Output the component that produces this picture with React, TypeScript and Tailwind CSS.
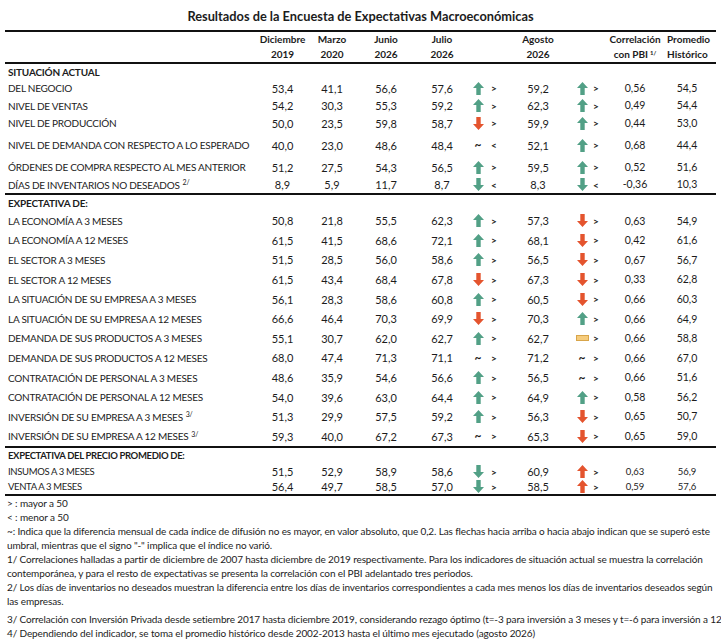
import React from "react";

type Ind = "gu" | "gd" | "ru" | "rd" | "t" | "y";

const GREEN = "#52a086";
const RED = "#e4542e";

function Arrow({ ind }: { ind: Ind }) {
  if (ind === "t") {
    return <span className="text-[12px] font-bold leading-none">~</span>;
  }
  if (ind === "y") {
    return <span className="block h-[6px] w-[13px] border border-[#d8a54a] bg-[#f6cc7c]" />;
  }
  const up = ind === "gu" || ind === "ru";
  const color = ind === "gu" || ind === "gd" ? GREEN : RED;
  return (
    <svg width="11" height="13" viewBox="0 0 11 13" className="block">
      <path
        d={
          up
            ? "M5.5 0 L11 6 L7.7 6 L7.7 13 L3.3 13 L3.3 6 L0 6 Z"
            : "M5.5 13 L11 7 L7.7 7 L7.7 0 L3.3 0 L3.3 7 L0 7 Z"
        }
        fill={color}
      />
    </svg>
  );
}

type RowData = {
  l: string;
  sup?: string;
  v: string[];
  a1: Ind;
  s1: string;
  ag: string;
  a2: Ind;
  s2: string;
  c: string;
  h: string;
  cls: string;
};

const GRID =
  "grid grid-cols-[252px_49px_50px_58px_54px_18px_14px_74px_14px_14px_64px_40px] items-center";

function Row({ r, small }: { r: RowData; small?: boolean }) {
  return (
    <div className={`${GRID} ${r.cls}`}>
      <div
        className={
          small
            ? "pl-[2px] whitespace-nowrap text-[9.5px] tracking-[-0.35px]"
            : "pl-[2px] whitespace-nowrap text-[10px] tracking-[-0.25px]"
        }
      >
        {r.l}
        {r.sup ? <sup className="ml-[3px] text-[7px]">{r.sup}</sup> : null}
      </div>
      {r.v.map((x, i) => (
        <div key={i} className="text-center">
          {x}
        </div>
      ))}
      <div className="flex justify-center">
        <Arrow ind={r.a1} />
      </div>
      <div className="text-center font-bold text-[10px]">{r.s1}</div>
      <div className="text-center">{r.ag}</div>
      <div className="flex justify-center">
        <Arrow ind={r.a2} />
      </div>
      <div className="text-center font-bold text-[10px]">{r.s2}</div>
      <div className={small ? "text-center text-[9.5px]" : "text-center text-[10.5px]"}>{r.c}</div>
      <div className={small ? "text-center text-[9.5px]" : "text-center text-[10.5px]"}>{r.h}</div>
    </div>
  );
}

const sit: RowData[] = [
  { l: "DEL NEGOCIO", v: ["53,4", "41,1", "56,6", "57,6"], a1: "gu", s1: ">", ag: "59,2", a2: "gu", s2: ">", c: "0,56", h: "54,5", cls: "h-[18px]" },
  { l: "NIVEL DE VENTAS", v: ["54,2", "30,3", "55,3", "59,2"], a1: "gu", s1: ">", ag: "62,3", a2: "gu", s2: ">", c: "0,49", h: "54,4", cls: "h-[17px]" },
  { l: "NIVEL DE PRODUCCIÓN", v: ["50,0", "23,5", "59,8", "58,7"], a1: "rd", s1: ">", ag: "59,9", a2: "gu", s2: ">", c: "0,44", h: "53,0", cls: "h-[18px]" },
  { l: "NIVEL DE DEMANDA CON RESPECTO A LO ESPERADO", v: ["40,0", "23,0", "48,6", "48,4"], a1: "t", s1: "<", ag: "52,1", a2: "gu", s2: ">", c: "0,68", h: "44,4", cls: "h-[26px]" },
  { l: "ÓRDENES DE COMPRA RESPECTO AL MES ANTERIOR", v: ["51,2", "27,5", "54,3", "56,5"], a1: "gu", s1: ">", ag: "59,5", a2: "gu", s2: ">", c: "0,52", h: "51,6", cls: "h-[18px]" },
  { l: "DÍAS DE INVENTARIOS NO DESEADOS", sup: "2/", v: ["8,9", "5,9", "11,7", "8,7"], a1: "gd", s1: "<", ag: "8,3", a2: "gd", s2: "<", c: "-0,36", h: "10,3", cls: "h-[17px]" },
];

const H = "h-[19.6px]";
const exp: RowData[] = [
  { l: "LA ECONOMÍA A 3 MESES", v: ["50,8", "21,8", "55,5", "62,3"], a1: "gu", s1: ">", ag: "57,3", a2: "rd", s2: ">", c: "0,63", h: "54,9", cls: H },
  { l: "LA ECONOMÍA A 12 MESES", v: ["61,5", "41,5", "68,6", "72,1"], a1: "gu", s1: ">", ag: "68,1", a2: "rd", s2: ">", c: "0,42", h: "61,6", cls: H },
  { l: "EL SECTOR A 3 MESES", v: ["51,5", "28,5", "56,0", "58,6"], a1: "gu", s1: ">", ag: "56,5", a2: "rd", s2: ">", c: "0,67", h: "56,7", cls: H },
  { l: "EL SECTOR A 12 MESES", v: ["61,5", "43,4", "68,4", "67,8"], a1: "rd", s1: ">", ag: "67,3", a2: "rd", s2: ">", c: "0,33", h: "62,8", cls: H },
  { l: "LA SITUACIÓN DE SU EMPRESA A 3 MESES", v: ["56,1", "28,3", "58,6", "60,8"], a1: "gu", s1: ">", ag: "60,5", a2: "rd", s2: ">", c: "0,66", h: "60,3", cls: H },
  { l: "LA SITUACIÓN DE SU EMPRESA A 12 MESES", v: ["66,6", "46,4", "70,3", "69,9"], a1: "rd", s1: ">", ag: "70,3", a2: "gu", s2: ">", c: "0,66", h: "64,9", cls: H },
  { l: "DEMANDA DE SUS PRODUCTOS A 3 MESES", v: ["55,1", "30,7", "62,0", "62,7"], a1: "gu", s1: ">", ag: "62,7", a2: "y", s2: ">", c: "0,66", h: "58,8", cls: H },
  { l: "DEMANDA DE SUS PRODUCTOS A 12 MESES", v: ["68,0", "47,4", "71,3", "71,1"], a1: "t", s1: ">", ag: "71,2", a2: "t", s2: ">", c: "0,66", h: "67,0", cls: H },
  { l: "CONTRATACIÓN DE PERSONAL A 3 MESES", v: ["48,6", "35,9", "54,6", "56,6"], a1: "gu", s1: ">", ag: "56,5", a2: "t", s2: ">", c: "0,66", h: "51,6", cls: H },
  { l: "CONTRATACIÓN DE PERSONAL A 12 MESES", v: ["54,0", "39,6", "63,0", "64,4"], a1: "gu", s1: ">", ag: "64,9", a2: "gu", s2: ">", c: "0,58", h: "56,2", cls: H },
  { l: "INVERSIÓN DE SU EMPRESA A 3 MESES", sup: "3/", v: ["51,3", "29,9", "57,5", "59,2"], a1: "gu", s1: ">", ag: "56,3", a2: "rd", s2: ">", c: "0,65", h: "50,7", cls: H },
  { l: "INVERSIÓN DE SU EMPRESA A 12 MESES", sup: "3/", v: ["59,3", "40,0", "67,2", "67,3"], a1: "t", s1: ">", ag: "65,3", a2: "rd", s2: ">", c: "0,65", h: "59,0", cls: H },
];

const precio: RowData[] = [
  { l: "INSUMOS A 3 MESES", v: ["51,5", "52,9", "58,9", "58,6"], a1: "gd", s1: ">", ag: "60,9", a2: "ru", s2: ">", c: "0,63", h: "56,9", cls: "h-[15px]" },
  { l: "VENTA A 3 MESES", v: ["56,4", "49,7", "58,5", "57,0"], a1: "gd", s1: ">", ag: "58,5", a2: "ru", s2: ">", c: "0,59", h: "57,6", cls: "h-[15px]" },
];

function Line() {
  return <div className="mx-[5px] h-[2px] bg-[#111]" />;
}

export default function App() {
  return (
    <div className="w-[721px] h-[642px] overflow-hidden bg-white text-[#1c1c1c] font-['Lato','Noto_Sans',sans-serif] text-[11px] leading-none">
      <div className="pt-[8px] h-[30px] text-center text-[12.8px] font-bold leading-[16px]">
        Resultados de la Encuesta de Expectativas Macroeconómicas
      </div>
      <Line />
      <div className="ml-[6px]">
        <div className={`${GRID} h-[30px] font-bold text-[10px] leading-[15px]`}>
          <div />
          <div className="text-center">Diciembre<br />2019</div>
          <div className="text-center">Marzo<br />2020</div>
          <div className="text-center">Junio<br />2026</div>
          <div className="text-center">Julio<br />2026</div>
          <div />
          <div />
          <div className="text-center">Agosto<br />2026</div>
          <div />
          <div />
          <div className="text-center whitespace-nowrap">
            Correlación<br />con PBI<sup className="ml-[2px] text-[6px]">1/</sup>
          </div>
          <div className="text-center whitespace-nowrap">Promedio<br />Histórico</div>
        </div>
      </div>
      <Line />
      <div className="ml-[6px]">
        <div className="h-[15px] flex items-center pl-[2px] font-bold text-[10px] tracking-[-0.2px]">SITUACIÓN ACTUAL</div>
        {sit.map((r) => (
          <Row key={r.l} r={r} />
        ))}
      </div>
      <Line />
      <div className="ml-[6px]">
        <div className="h-[16px] flex items-center pl-[2px] font-bold text-[10px] tracking-[-0.2px]">EXPECTATIVA DE:</div>
        {exp.map((r) => (
          <Row key={r.l} r={r} />
        ))}
      </div>
      <Line />
      <div className="ml-[6px]">
        <div className="h-[16px] flex items-center pl-[2px] font-bold text-[9.5px] tracking-[-0.35px]">
          EXPECTATIVA DEL PRECIO PROMEDIO DE:
        </div>
        {precio.map((r) => (
          <Row key={r.l} r={r} small />
        ))}
      </div>
      <Line />
      <div className="pl-[7px] text-[10px] tracking-[-0.12px] leading-[14px] whitespace-nowrap">
        <div>&gt; : mayor a 50</div>
        <div>&lt; : menor a 50</div>
        <div>~: Indica que la diferencia mensual de cada índice de difusión no es mayor, en valor absoluto, que 0,2. Las flechas hacia arriba o hacia abajo indican que se superó este</div>
        <div>umbral, mientras que el signo "-" implica que el índice no varió.</div>
        <div>1/ Correlaciones halladas a partir de diciembre de 2007 hasta diciembre de 2019 respectivamente. Para los indicadores de situación actual se muestra la correlación</div>
        <div>contemporánea, y para el resto de expectativas se presenta la correlación con el PBI adelantado tres periodos.</div>
        <div>2/ Los días de inventarios no deseados muestran la diferencia entre los días de inventarios correspondientes a cada mes menos los días de inventarios deseados según</div>
        <div>las empresas.</div>
        <div className="mt-[4px]">3/ Correlación con Inversión Privada desde setiembre 2017 hasta diciembre 2019, considerando rezago óptimo (t=-3 para inversión a 3 meses y t=-6 para inversión a 12 meses).</div>
        <div>4/ Dependiendo del indicador, se toma el promedio histórico desde 2002-2013 hasta el último mes ejecutado (agosto 2026)</div>
      </div>
    </div>
  );
}
